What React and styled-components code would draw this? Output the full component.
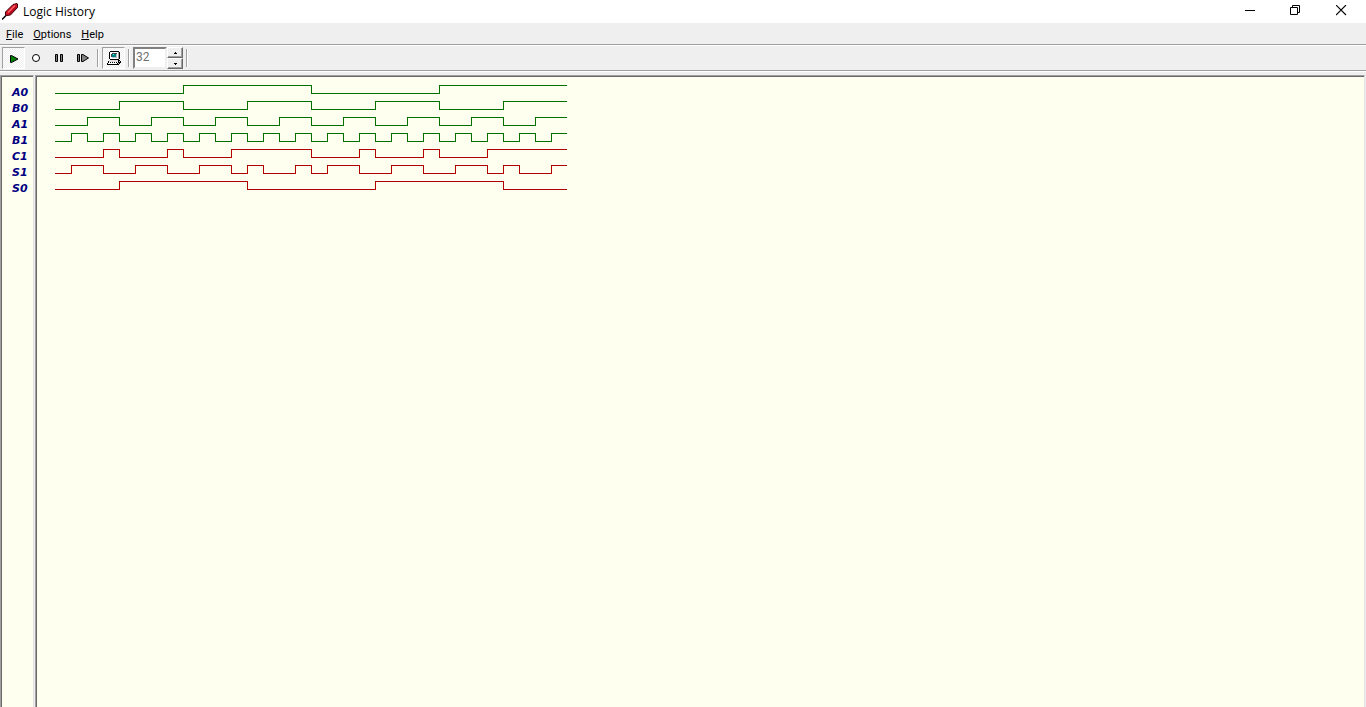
import React, { useState } from "react";
import styled, { createGlobalStyle } from "styled-components";

const Global = createGlobalStyle`
  *, *::before, *::after { box-sizing: border-box; }
  html, body, #root { height: 100%; }
  body {
    margin: 0;
    overflow: hidden;
    background: #efefef;
    color: #000;
    font: 11px/14px Roboto, "Noto Sans", sans-serif;
  }
  button, input { font: inherit; color: inherit; }
`;

const Window = styled.div`
  display: flex;
  flex-direction: column;
  height: 100vh;
`;

const TitleBar = styled.header`
  display: flex;
  align-items: center;
  height: 23px;
  padding-left: 2px;
  background: #fff;
`;

const Title = styled.h1`
  flex: 1;
  margin: 0 0 0 3px;
  font: 12px/16px "Open Sans", sans-serif;
`;

const WindowButton = styled.button`
  display: flex;
  align-items: center;
  justify-content: center;
  width: 46px;
  height: 23px;
  padding: 0 4px 2px 0;
  border: 0;
  background: transparent;
`;

const MenuBar = styled.nav`
  display: flex;
  align-items: center;
  gap: 10px;
  height: 21px;
  padding: 3px 6px 0;
`;

const MenuItem = styled.button`
  padding: 0;
  border: 0;
  background: transparent;

  &::first-letter { text-decoration: underline; }
`;

const ToolBar = styled.div`
  display: flex;
  align-items: center;
  height: 27px;
  padding: 1px 2px 0;
  border-top: 1px solid #a0a0a0;
  border-bottom: 1px solid #a0a0a0;
  box-shadow: inset 0 1px #fff, 0 1px #fff;
`;

const ToolButton = styled.button`
  display: flex;
  align-items: center;
  justify-content: center;
  width: 23px;
  height: 22px;
  padding: 0;
  border: 1px solid transparent;
  background: transparent;

  &[aria-pressed="true"] {
    border-color: #a0a0a0 #fff #fff #a0a0a0;
    background: repeating-conic-gradient(#fff 0 25%, #efefef 0 50%) 0 0 / 2px 2px;
  }
`;

const Separator = styled.span`
  width: 2px;
  height: 18px;
  margin: 0 3px;
  border-left: 1px solid #a0a0a0;
  border-right: 1px solid #fff;
`;

const Spinner = styled.label`
  display: flex;
  height: 22px;
`;

const SpinnerInput = styled.input`
  width: 34px;
  height: 22px;
  padding: 0 2px 2px 1px;
  border: 2px solid;
  border-color: #808080 #efefef #efefef #808080;
  outline: 0;
  background: #fff;
  color: #707070;
  font-size: 12px;
`;

const SpinnerButtons = styled.span`
  display: flex;
  flex-direction: column;
  width: 16px;
`;

const StepButton = styled.button`
  display: flex;
  flex: 1;
  align-items: center;
  justify-content: center;
  padding: 0;
  border: 1px solid;
  border-color: #fff #696969 #696969 #fff;
  background: #efefef;
  box-shadow: inset -1px -1px #a0a0a0;
`;

const Panels = styled.main`
  display: grid;
  grid-template-columns: 34px 1fr;
  gap: 1px;
  flex: 1;
  min-height: 0;
  padding: 4px 1px 0 0;
`;

const Panel = styled.section`
  padding: 8px 0 0 1px;
  border: solid;
  border-width: 1px 1px 0 1px;
  border-color: #a0a0a0 #e3e3e3 #e3e3e3 #a0a0a0;
  box-shadow: inset 1px 1px #696969;
  background: #fffff0;
`;

const SignalList = styled.ul`
  margin: 0;
  padding: 1px 0 0 10px;
  list-style: none;
`;

const SignalName = styled.li`
  height: 16px;
  color: #000080;
  font: italic bold 11px/16px "DejaVu Sans", Verdana, sans-serif;
`;

const Waves = styled.div`
  display: flex;
  flex-direction: column;
  padding-left: 18px;
`;

const Icon = styled.svg`
  display: block;
  flex: none;
`;

const STEP = 16;
const SAMPLES = 32;
const GREEN = "#007000";
const RED = "#b00000";

const SIGNALS = [
  { name: "A0", color: GREEN, edges: [8, 16, 24] },
  { name: "B0", color: GREEN, edges: [4, 8, 12, 16, 20, 24, 28] },
  { name: "A1", color: GREEN, edges: Array.from({ length: 15 }, (_, i) => 2 * (i + 1)) },
  { name: "B1", color: GREEN, edges: Array.from({ length: 31 }, (_, i) => i + 1) },
  { name: "C1", color: RED, edges: [3, 4, 7, 8, 11, 16, 19, 20, 23, 24, 27] },
  { name: "S1", color: RED, edges: [1, 3, 5, 7, 9, 11, 12, 13, 15, 16, 17, 19, 21, 23, 25, 27, 28, 29, 31] },
  { name: "S0", color: RED, edges: [4, 12, 20, 28] },
];

function wavePath(edges) {
  let d = "M0 9.5";
  edges.forEach((edge, i) => {
    d += `H${edge * STEP + 0.5}V${i % 2 === 0 ? 1.5 : 9.5}`;
  });
  return `${d}H${SAMPLES * STEP}`;
}

function Wave({ signal }) {
  return (
    <Icon width={SAMPLES * STEP} height="16" role="img" aria-label={signal.name}>
      <path d={wavePath(signal.edges)} fill="none" stroke={signal.color} shapeRendering="crispEdges" />
    </Icon>
  );
}

const AppIcon = () => (
  <Icon width="18" height="18" viewBox="0 0 18 18" aria-hidden="true">
    <path d="M0 16.5L5 11.5" stroke="#000" strokeWidth="1.4" />
    <path d="M3.5 12.5V9L11 1.5L15 .5L15.5 1V4.5L8.5 12L5 12.5Z" fill="#d01424" stroke="#400008" />
    <path d="M6 9.5L13 2.5" stroke="#ff6870" strokeWidth="1.2" />
    <path d="M7.5 11L14.5 4" stroke="#900014" />
  </Icon>
);

const PlayIcon = () => (
  <Icon width="9" height="9" aria-hidden="true">
    <path d="M1.5 1.5V8.5H2.5L9 5L2.5 1.5Z" fill="#008000" stroke="#000" />
  </Icon>
);

const StopIcon = () => (
  <Icon width="9" height="9" aria-hidden="true">
    <circle cx="4" cy="4" r="3.5" fill="#fff" stroke="#000" />
  </Icon>
);

const PauseIcon = () => (
  <Icon width="9" height="9" aria-hidden="true">
    <path d="M.5 .5H2.5V7.5H.5ZM5.5 .5H7.5V7.5H5.5Z" fill="#808080" stroke="#000" />
  </Icon>
);

const StepIcon = () => (
  <Icon width="13" height="9" aria-hidden="true">
    <path d="M1.5 .5H3.5V7.5H1.5ZM5.5 .5V7.5H7L12.5 4L7 .5Z" fill="#808080" stroke="#000" />
  </Icon>
);

const ComputerIcon = () => (
  <Icon width="16" height="16" shapeRendering="crispEdges" aria-hidden="true">
    <path d="M4 1H13V2H14V9H13V10H4V9H3V2H4Z" fill="#000" />
    <path d="M4 2H12V9H4Z" fill="#fff" />
    <path d="M12 2H13V9H12Z" fill="#a0a0a0" />
    <path d="M6 4H10V7H6Z" fill="#008080" />
    <path d="M6 3H11V4H6ZM5 4H6V7H5Z" fill="#404040" />
    <path d="M7 4H8V5H7Z" fill="#00ffff" />
    <path d="M10 4H11V8H6V7H10Z" fill="#c0c0c0" />
    <path d="M3 10H14V11H15V13H14V14H13V15H1V13H2V11H3Z" fill="#000" />
    <path d="M3 10H12V12H3Z" fill="#e0e0e0" />
    <path d="M2 13H11V14H2ZM3 12H4V13H3ZM5 12H6V13H5ZM7 12H8V13H7ZM9 12H10V13H9ZM11 12H12V13H11Z" fill="#fff" />
    <path d="M13 11H14V12H13ZM12 13H13V14H12Z" fill="#c0c0c0" />
  </Icon>
);

const MinimizeIcon = () => (
  <Icon width="11" height="11" aria-hidden="true">
    <path d="M1 5.5H11" stroke="#000" />
  </Icon>
);

const RestoreIcon = () => (
  <Icon width="11" height="11" aria-hidden="true">
    <path d="M.5 2.5H7.5V9.5H.5ZM2.5 2.5V.5H9.5V7.5H7.5" fill="none" stroke="#000" />
  </Icon>
);

const CloseIcon = () => (
  <Icon width="11" height="11" aria-hidden="true">
    <path d="M0 0L10 10M10 0L0 10" stroke="#000" strokeWidth="1.1" />
  </Icon>
);

const Arrow = ({ down }) => (
  <Icon width="5" height="2" shapeRendering="crispEdges" aria-hidden="true">
    <path d={down ? "M1 0H4V1H3V2H2V1H1Z" : "M2 0H3V1H4V2H1V1H2Z"} fill="#000" />
  </Icon>
);

export default function App() {
  const [count, setCount] = useState(32);
  return (
    <>
      <Global />
      <Window>
        <TitleBar>
          <AppIcon />
          <Title>Logic History</Title>
          <WindowButton aria-label="Minimize"><MinimizeIcon /></WindowButton>
          <WindowButton aria-label="Restore"><RestoreIcon /></WindowButton>
          <WindowButton aria-label="Close"><CloseIcon /></WindowButton>
        </TitleBar>
        <MenuBar>
          <MenuItem>File</MenuItem>
          <MenuItem>Options</MenuItem>
          <MenuItem>Help</MenuItem>
        </MenuBar>
        <ToolBar role="toolbar" aria-label="Simulation">
          <ToolButton aria-label="Run" aria-pressed="true"><PlayIcon /></ToolButton>
          <ToolButton aria-label="Stop"><StopIcon /></ToolButton>
          <ToolButton aria-label="Pause"><PauseIcon /></ToolButton>
          <ToolButton aria-label="Step"><StepIcon /></ToolButton>
          <Separator />
          <ToolButton aria-label="Display" aria-pressed="true"><ComputerIcon /></ToolButton>
          <Separator />
          <Spinner>
            <SpinnerInput aria-label="Samples" value={count} onChange={(e) => setCount(Number(e.target.value) || 0)} />
            <SpinnerButtons>
              <StepButton aria-label="More" onClick={() => setCount(count + 1)}><Arrow /></StepButton>
              <StepButton aria-label="Fewer" onClick={() => setCount(count - 1)}><Arrow down /></StepButton>
            </SpinnerButtons>
          </Spinner>
          <Separator />
        </ToolBar>
        <Panels>
          <Panel aria-label="Signals">
            <SignalList>
              {SIGNALS.map((s) => <SignalName key={s.name}>{s.name}</SignalName>)}
            </SignalList>
          </Panel>
          <Panel aria-label="History">
            <Waves>
              {SIGNALS.map((s) => <Wave key={s.name} signal={s} />)}
            </Waves>
          </Panel>
        </Panels>
      </Window>
    </>
  );
}
